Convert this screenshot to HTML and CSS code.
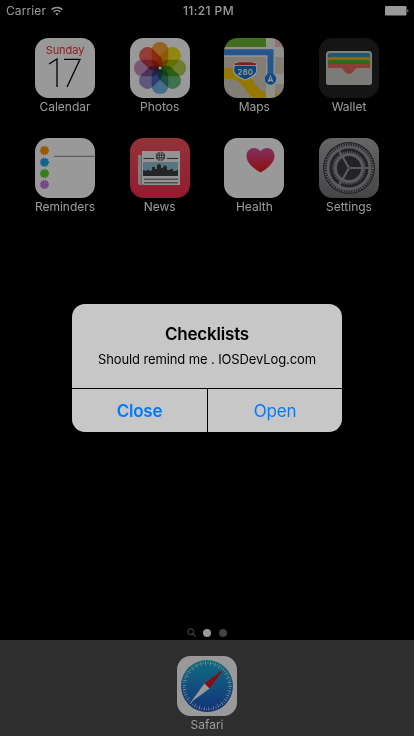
FILE: index.html
```html
<!DOCTYPE html>
<html lang="en">
<head>
<meta charset="utf-8">
<title>Home Screen</title>
<link rel="stylesheet" href="styles.css">
</head>
<body>
<div class="phone">
  <header class="status">
    <div class="carrier"><span>Carrier</span>
      <svg class="wifi" width="12" height="10" viewBox="0 0 12 10" fill="none" stroke="#fff" stroke-width="1.5"><path d="M.6 3.6a7.7 7.7 0 0 1 10.8 0M2.7 5.9a4.7 4.7 0 0 1 6.6 0"/><path d="M6 9.4L4.4 7.8a2.3 2.3 0 0 1 3.2 0z" fill="#fff" stroke="none"/></svg>
    </div>
    <div class="time">11:21 PM</div>
    <svg class="battery" width="24" height="10" viewBox="0 0 24 10"><rect width="21.5" height="9.5" rx="1.2" fill="#fff"/><path d="M22.3 3.2q1.2.3 1.2 1.6t-1.2 1.6z" fill="#fff"/></svg>
  </header>

  <main class="apps">
    <div class="app">
      <div class="icon calendar"><span class="weekday">Sunday</span><span class="day"><svg width="36" height="30" viewBox="0 0 36 30" role="img" aria-label="17" fill="none" stroke="#000" stroke-width="1.3"><path d="M2 6L10 1v28M17 1.300h16L20 29"/></svg></span></div>
      <span class="label">Calendar</span>
    </div>
    <div class="app">
      <svg class="icon" viewBox="0 0 60 60">
        <rect width="60" height="60" fill="#fff"/>
        <g class="petals">
          <rect x="21.700" y="4" width="16.600" height="26" rx="8" fill="#f9a63a"/>
          <rect x="21.700" y="4" width="16.600" height="26" rx="8" fill="#eee31b" transform="rotate(45 30 30)"/>
          <rect x="21.700" y="4" width="16.600" height="26" rx="8" fill="#b4d14b" transform="rotate(90 30 30)"/>
          <rect x="21.700" y="4" width="16.600" height="26" rx="8" fill="#6bbd7e" transform="rotate(135 30 30)"/>
          <rect x="21.700" y="4" width="16.600" height="26" rx="8" fill="#76b7e8" transform="rotate(180 30 30)"/>
          <rect x="21.700" y="4" width="16.600" height="26" rx="8" fill="#9b91cd" transform="rotate(225 30 30)"/>
          <rect x="21.700" y="4" width="16.600" height="26" rx="8" fill="#cb91bf" transform="rotate(270 30 30)"/>
          <rect x="21.700" y="4" width="16.600" height="26" rx="8" fill="#f4685a" transform="rotate(315 30 30)"/>
        </g>
        <circle cx="30" cy="30" r="1.500" fill="#fff"/>
      </svg>
      <span class="label">Photos</span>
    </div>
    <div class="app">
      <svg class="icon" viewBox="0 0 60 60">
        <rect width="60" height="60" fill="#dbd3c3"/>
        <path d="M0 0h42v9.500H0z" fill="#6cb833"/>
        <path d="M50 0h10v9H50z" fill="#f3bfc9"/>
        <path d="M0 30h9q7 0 14 6c8 7 10 17 23 21v3H30C21 55 19 45 12 42q-5-2-12-1z" fill="#fac800"/>
        <path d="M50 55l10 2v3H50z" fill="#fac800"/>
        <path d="M0 9h60v10H0zM42 0h9v60h-9zM50 36h10v10H50z" fill="#f2efe9"/>
        <path d="M0 14.200h46.500v27" fill="none" stroke="#408eec" stroke-width="6"/>
        <circle cx="46.500" cy="41" r="5.700" fill="#1879df"/>
        <path d="M46.500 36.800l3.100 7.700-3.100-1.800-3.100 1.800z" fill="#fff"/><path d="M46.500 39.200v2.600" stroke="#1879df" stroke-width=".8"/>
        <path d="M10.500 25q2.300.8 4.200-.8h13q2 1.600 4.200.8c-.3 2.500 1.300 4.700.8 8-.7 5-6 6.200-11.500 9-5.500-2.800-10.800-4-11.500-9-.5-3.300 1.100-5.500.8-8z" fill="#176fcc" stroke="#fff" stroke-width="1.100"/>
        <path d="M10.600 25q2.300.8 4.200-.8h12.800q2 1.600 4.200.8v2H10.600z" fill="#d9352e"/>
        <path d="M10.600 27.500h21.300" stroke="#fff" stroke-width=".8"/>
        <text x="21.300" y="36.500" class="route">280</text>
      </svg>
      <span class="label">Maps</span>
    </div>
    <div class="app">
      <svg class="icon" viewBox="0 0 60 60">
        <rect width="60" height="60" fill="#232323"/>
        <rect x="7" y="13" width="46" height="34" rx="3.500" fill="#d9d6cd"/>
        <rect x="8.800" y="15" width="42.400" height="10" rx="2" fill="#3290c4"/>
        <path d="M8.800 21q0-2 2-2h38.400q2 0 2 2v5H8.800z" fill="#f2a922"/>
        <path d="M8.800 24q0-2 2-2h38.400q2 0 2 2v5H8.800z" fill="#58aa39"/>
        <path d="M8.800 28q0-2 2-2h38.400q2 0 2 2v11H8.800z" fill="#e46a5e"/>
        <path d="M7 30h14.500q2 0 3 2 2.500 4 5.500 4t5.500-4q1-2 3-2H53v14q0 3-3 3H10q-3 0-3-3z" fill="#d0cec7"/>
      </svg>
      <span class="label">Wallet</span>
    </div>
    <div class="app">
      <svg class="icon" viewBox="0 0 60 60">
        <rect width="60" height="60" fill="#fff"/>
        <path d="M19 18.300h41" stroke="#858589"/>
        <g fill="none" stroke-width="1.800" stroke-dasharray="1.100 .9">
          <circle cx="9.500" cy="12.500" r="3.800" stroke="#ff9500"/><circle cx="9.500" cy="24.300" r="3.800" stroke="#1fa7ee"/><circle cx="9.500" cy="35.500" r="3.800" stroke="#5dd22d"/><circle cx="9.500" cy="46.500" r="3.800" stroke="#c879e0"/>
        </g>
        <circle cx="9.500" cy="12.500" r="3.800" fill="#ff9500"/><circle cx="9.500" cy="24.300" r="3.800" fill="#1fa7ee"/><circle cx="9.500" cy="35.500" r="3.800" fill="#5dd22d"/><circle cx="9.500" cy="46.500" r="3.800" fill="#c879e0"/>
      </svg>
      <span class="label">Reminders</span>
    </div>
    <div class="app">
      <svg class="icon" viewBox="0 0 60 60">
        <defs><linearGradient id="news" x2="0" y2="1"><stop stop-color="#f7545f"/><stop offset="1" stop-color="#f52d51"/></linearGradient></defs>
        <rect width="60" height="60" fill="url(#news)"/>
        <path d="M8 17h6v30h-4q-2 0-2-2z" fill="#d3d3d3"/>
        <path d="M12 13h38v34H14q-2 0-2-2z" fill="#f5f5f5"/>
        <path d="M11.500 17v28q0 2 2 2" fill="none" stroke="#999" stroke-width=".8"/>
        <path d="M13.500 20.500H24M37 20.500h11" stroke="#444"/>
        <circle cx="30.500" cy="18.500" r="4.700" fill="#444"/>
        <path d="M30.500 14v9M26 18.500h9M27 16h7M27 21h7" stroke="#eee" stroke-width=".6"/><ellipse cx="30.500" cy="18.500" rx="2.300" ry="4.500" fill="none" stroke="#eee" stroke-width=".6"/>
        <path d="M13 24h35v10H13z" fill="#8fc3d8"/>
        <path d="M13 38v-6l3 1 2-1.500 2 1.500 2-1v-3h3v2h2v-4l2-1 2 1v3h2v-1l2-2 2 2v3h3v-1h3v2h2l3-1v6z" fill="#3c3e42"/>
        <path d="M14 41.200h34M14 44.700h34" stroke="#888" stroke-width="1.500"/>
      </svg>
      <span class="label">News</span>
    </div>
    <div class="app">
      <svg class="icon" viewBox="0 0 60 60">
        <defs><linearGradient id="heart" x2="0" y2="1"><stop stop-color="#d94ea0"/><stop offset="1" stop-color="#e91b15"/></linearGradient></defs>
        <rect width="60" height="60" fill="#fff"/>
        <path d="M36.500 34.500C30 31 22.500 25 22.500 18c0-5 3.500-8 7.300-8 3 0 5.200 1.300 6.700 3.300C38 11.300 40.200 10 43.200 10c3.800 0 7.300 3 7.300 8 0 7-7.500 13-14 16.500z" fill="url(#heart)"/>
      </svg>
      <span class="label">Health</span>
    </div>
    <div class="app">
      <svg class="icon" viewBox="0 0 60 60">
        <defs><linearGradient id="steel" x2="0" y2="1"><stop stop-color="#aaaaad"/><stop offset="1" stop-color="#747479"/></linearGradient></defs>
        <rect width="60" height="60" fill="url(#steel)"/>
        <g fill="none">
          <circle cx="30" cy="30" r="26" fill="#3b3b3e"/>
          <circle cx="30" cy="30" r="23.700" stroke="#96969b" stroke-width="2.600" stroke-dasharray="1.240 1.240"/>
          <circle cx="30" cy="30" r="21" stroke="#96969b" stroke-width="3"/>
          <circle cx="30" cy="30" r="15.800" stroke="#96969b" stroke-width="2" stroke-dasharray="1 1"/>
          <circle cx="30" cy="30" r="13.600" stroke="#96969b" stroke-width="3"/>
          <path d="M30 30h20.500M30 30l-10.200-17.700M30 30L19.800 47.700" stroke="#96969b" stroke-width="2.200"/>
          <circle cx="30" cy="30" r="1.300" fill="#3b3b3e" stroke="#96969b" stroke-width="1"/>
        </g>
      </svg>
      <span class="label">Settings</span>
    </div>
  </main>

  <div class="pager">
    <svg width="9" height="9" viewBox="0 0 9 9" fill="none" stroke="#686868" stroke-width="1.300"><circle cx="3.700" cy="3.700" r="2.900"/><path d="M5.900 5.900l2.700 2.700"/></svg>
    <i class="dot current"></i><i class="dot"></i>
  </div>

  <footer class="dock">
    <div class="app">
      <svg class="icon" viewBox="0 0 60 60">
        <defs><linearGradient id="sea" x2="0" y2="1"><stop stop-color="#19b5d2"/><stop offset=".5" stop-color="#1f86d2"/><stop offset="1" stop-color="#1d51c5"/></linearGradient></defs>
        <rect width="60" height="60" fill="#fff"/>
        <circle cx="30" cy="30" r="26" fill="url(#sea)"/>
        <circle cx="30" cy="30" r="23.300" fill="none" stroke="#dcecf5" stroke-width="2.200" stroke-dasharray=".65 1.790"/>
        <circle cx="30" cy="30" r="22.500" fill="none" stroke="#dcecf5" stroke-width="3.800" stroke-dasharray=".6 4.112"/>
        <path d="M46.500 13.500L27.400 27.400l5.200 5.200z" fill="#e8151b"/>
        <path d="M13.500 46.500l13.900-19.100 5.200 5.200z" fill="#fff"/>
      </svg>
      <span class="label">Safari</span>
    </div>
  </footer>

  <div class="scrim">
    <section class="alert" role="alertdialog">
      <div class="content"><h1>Checklists</h1><p>Should remind me . IOSDevLog.com</p></div>
      <div class="actions"><button class="close">Close</button><button>Open</button></div>
    </section>
  </div>
</div>
</body>
</html>
```
FILE: styles.css
```css
* { box-sizing: border-box; }
body { margin: 0; background: #000; font-family: Inter, "Liberation Sans", sans-serif; }
.phone { position: relative; width: 414px; height: 736px; overflow: hidden; background: #000; color: #fff; display: flex; flex-direction: column; }
.status { height: 20px; padding: 0 5px 0 6px; display: grid; grid-template-columns: 1fr auto 1fr; align-items: center; font-size: 12px; line-height: 20px; }
.carrier { display: flex; align-items: center; gap: 5px; letter-spacing: .1px; }
.carrier span, .time { padding-top: 1px; }
.time { padding-left: 2px; font-weight: 500; letter-spacing: .4px; }
.battery { justify-self: end; }
.apps { padding: 18px 35px 0; display: grid; grid-template-columns: repeat(4, 60px); justify-content: space-between; row-gap: 24px; }
.app { width: 60px; height: 76px; display: flex; flex-direction: column; align-items: center; }
.icon { display: block; flex: none; width: 60px; height: 60px; border-radius: 13.5px; overflow: hidden; }
.label { font-size: 12px; line-height: 16px; padding-top: 1px; letter-spacing: 0; white-space: nowrap; }
.calendar { background: #fff; display: flex; flex-direction: column; align-items: center; }
.weekday { font-size: 11px; line-height: 13px; padding-top: 6px; color: #f5322d; letter-spacing: -.05px; }
.day { display: block; height: 30px; padding-top: 1px; }
.petals rect { mix-blend-mode: multiply; }
.route { font-size: 7.8px; font-weight: 600; fill: #fff; text-anchor: middle; letter-spacing: .3px; }
.pager { margin-top: auto; height: 15px; padding-right: 1px; display: flex; justify-content: center; align-items: center; gap: 8px; }
.pager svg { margin-right: -1px; }
.dot { width: 8px; height: 8px; border-radius: 50%; background: #707070; }
.dot.current { background: #fff; }
.dock { height: 96px; padding-top: 16px; background: #4d4d4d; display: flex; justify-content: center; }
.scrim { position: absolute; inset: 0; background: rgba(0, 0, 0, .4); display: flex; align-items: center; justify-content: center; }
.alert { width: 270px; height: 128px; border-radius: 13px; overflow: hidden; background: #000; color: #000; display: flex; flex-direction: column; gap: 1px; text-align: center; }
.content { height: 84px; padding-top: 20px; background: #c7c7c7; }
h1 { margin: 0; font-size: 17px; line-height: 21px; font-weight: 600; letter-spacing: -.2px; }
p { margin: 5px 0 0; font-size: 13px; line-height: 18px; letter-spacing: -.12px; white-space: nowrap; }
.actions { flex: 1; display: grid; grid-template-columns: 135px 134px; gap: 1px; }
button { border: 0; padding: 0; background: #c7c7c7; color: #007aff; font: 400 17px Inter, "Liberation Sans", sans-serif; letter-spacing: -.2px; }
.close { font-weight: 600; }
```
